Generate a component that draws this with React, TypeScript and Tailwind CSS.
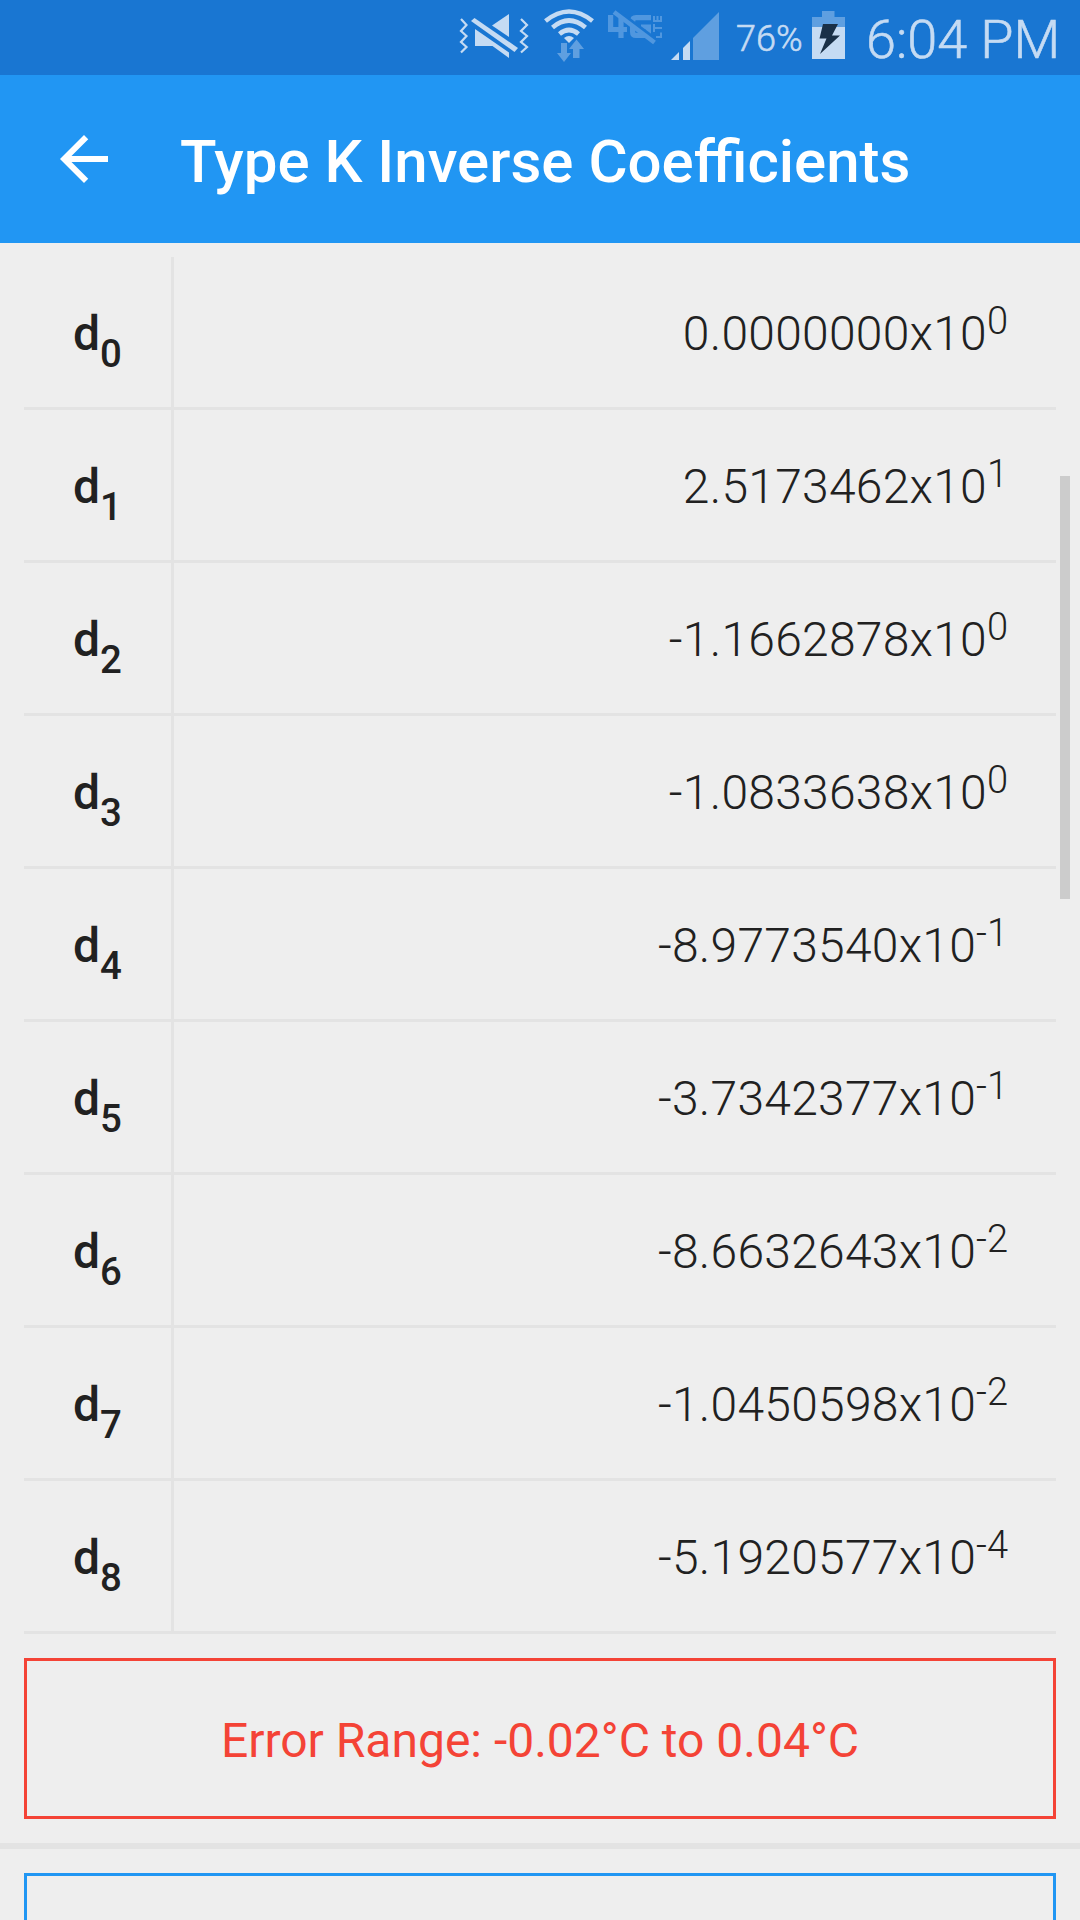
import React from 'react';

interface Coefficient {
  index: number;
  mantissa: string;
  exponent: string;
}

const coefficients: Coefficient[] = [
  { index: 0, mantissa: '0.0000000', exponent: '0' },
  { index: 1, mantissa: '2.5173462', exponent: '1' },
  { index: 2, mantissa: '-1.1662878', exponent: '0' },
  { index: 3, mantissa: '-1.0833638', exponent: '0' },
  { index: 4, mantissa: '-8.9773540', exponent: '-1' },
  { index: 5, mantissa: '-3.7342377', exponent: '-1' },
  { index: 6, mantissa: '-8.6632643', exponent: '-2' },
  { index: 7, mantissa: '-1.0450598', exponent: '-2' },
  { index: 8, mantissa: '-5.1920577', exponent: '-4' },
];

const MuteIcon: React.FC = () => (
  <svg className="h-[44px] w-[70px]" viewBox="0 0 70 44" fill="#c5dbf3">
    <path d="M16 15 L50 38.500 V44 L33.500 32 H16 Z" />
    <path d="M33 11.500 L50 0 V23 Z" />
    <path d="M12 7 L15.500 4 L59 34 L55.500 38 Z" />
    <g fill="none" stroke="#c5dbf3" strokeWidth="2.200">
      <path d="M2 5 L7.500 11 L2 17 L7.500 22 L2 28 L7.500 33 L2 38.500" />
      <path d="M62 5 L68 11 L62 17 L68 22 L62 28 L68 33 L62 38.500" />
    </g>
  </svg>
);

const WifiIcon: React.FC = () => (
  <svg className="h-[54px] w-[50px]" viewBox="0 0 50 54">
    <g fill="none" stroke="#c5dbf3" strokeWidth="4.600">
      <path d="M1.500 13 Q25 -6 48.500 13" />
      <path d="M8.500 19.500 Q25 5.500 41.500 19.500" />
      <path d="M15.500 26 Q25 18 34.500 26" />
    </g>
    <path d="M20 30 Q25 26 30 30 L25 35 Z" fill="#c5dbf3" />
    <path d="M17 35 H23 V45 H27 L20 54 L13 45 H17 Z" fill="#5f9fe0" />
    <path d="M29 50 H35.500 V41 H40 L32.500 31.500 L25 41 H29 Z" fill="#5f9fe0" />
  </svg>
);

const NoLteIcon: React.FC = () => (
  <svg className="h-[36px] w-[55px]" viewBox="0 0 55 36">
    <g fill="none" stroke="#5097df" strokeWidth="5.200">
      <path d="M2.600 6 V20.500 H19 M13 6 V29" />
      <path d="M43 8.600 H28 Q24.600 8.600 24.600 12 V23 Q24.600 26.400 28 26.400 H40.400 V18 H33" />
    </g>
    <path d="M8 1 L51 33" stroke="#1976d2" strokeWidth="4" />
    <path d="M6 3 L46.500 33.500" stroke="#5097df" strokeWidth="4.600" />
    <g fill="none" stroke="#5097df" strokeWidth="2">
      <path d="M46 7 V12 H53 V7 M49.500 7 V12" />
      <path d="M46 15 V23 M46 19 H54" />
      <path d="M48 28 H53 V23.500" />
    </g>
  </svg>
);

const SignalIcon: React.FC = () => (
  <svg className="h-[48px] w-[48px]" viewBox="0 0 48 48">
    <path d="M0 48 L8 40 V48 Z" fill="#c5dbf3" />
    <path d="M12 48 V36 L19 29 V48 Z" fill="#c5dbf3" />
    <path d="M22 48 V26 L48 0 V48 Z" fill="#5f9fe0" />
  </svg>
);

const BatteryIcon: React.FC = () => (
  <svg className="h-[48px] w-[33px]" viewBox="0 0 33 48">
    <path d="M0 6 H10 V0 H22.500 V6 H33 V17 H0 Z" fill="#5f9fe0" />
    <path d="M0 16 H33 V48 H0 Z" fill="#c5dbf3" />
    <path d="M11 13 H26 L20 24.500 H28 L8 43 L14.500 27.500 H7.500 Z" fill="#193048" />
  </svg>
);

const StatusBar: React.FC = () => (
  <div className="flex h-[75px] shrink-0 items-start bg-[#1976d2] font-light text-[#c5dbf3] [-webkit-text-stroke:0.6px_#c5dbf3]">
    <div className="ml-[459px] mt-[14px]">
      <MuteIcon />
    </div>
    <div className="ml-[15px] mt-[8px]">
      <WifiIcon />
    </div>
    <div className="ml-[14px] mt-[9px]">
      <NoLteIcon />
    </div>
    <div className="ml-[8px] mt-[12px]">
      <SignalIcon />
    </div>
    <div className="ml-[17px] mt-[18px] w-[76px] whitespace-nowrap text-[36px] leading-[42px]">76%</div>
    <div className="mt-[11px]">
      <BatteryIcon />
    </div>
    <div className="ml-[21px] mt-[8px] whitespace-nowrap text-[54px] leading-[63px]">6:04 PM</div>
  </div>
);

const AppBar: React.FC = () => (
  <div className="flex h-[168px] shrink-0 items-center bg-[#2196f3] text-white">
    <button className="ml-[60px]" aria-label="Back">
      <svg className="h-[48px] w-[48px]" viewBox="4 4 16 16" fill="currentColor">
        <path d="M20 11H7.830l5.590-5.590L12 4l-8 8 8 8 1.410-1.410L7.830 13H20v-2z" />
      </svg>
    </button>
    <h1 className="ml-[72px] mt-[6px] whitespace-nowrap text-[60px] font-medium leading-[72px]">
      Type K Inverse Coefficients
    </h1>
  </div>
);

const CoefficientRow: React.FC<{ coefficient: Coefficient }> = ({ coefficient }) => (
  <div className="flex h-[153px] border-b-3 border-[#e3e3e3]">
    <div className="w-[150px] border-r-3 border-[#e3e3e3] pl-[49px] pt-[47px] text-[48px] font-medium leading-[60px]">
      d<span className="align-[-17px] text-[38.4px] leading-[0px]">{coefficient.index}</span>
    </div>
    <div className="flex-1 pr-[48px] pt-[47px] text-right text-[48px] font-light leading-[60px]">
      <span className="tracking-[0.25px]">{coefficient.mantissa}x10</span>
      <span className="align-[16px] text-[38px] leading-[0px]">{coefficient.exponent}</span>
    </div>
  </div>
);

const App: React.FC = () => {
  return (
    <div className="relative flex h-[1920px] w-[1080px] flex-col overflow-hidden bg-[#eeeeee] font-['Roboto',sans-serif] text-[#212121]">
      <StatusBar />
      <AppBar />

      {/* Coefficient list */}
      <div className="mx-6 mt-[14px]">
        {coefficients.map((coefficient) => (
          <CoefficientRow key={coefficient.index} coefficient={coefficient} />
        ))}
      </div>

      <div className="mx-6 mt-[24px] flex h-[161px] shrink-0 items-center justify-center border-3 border-[#f44336] pt-[4px] text-[48px] text-[#f44336]">
        Error Range: -0.02°C to 0.04°C
      </div>

      <div className="mt-[24px] h-[6px] shrink-0 bg-[#e3e3e3]" />

      {/* Next range, cut off by the screen edge */}
      <div className="mx-6 mt-[24px] h-[161px] shrink-0 border-3 border-[#2196f3]" />

      {/* Scroll indicator */}
      <div className="absolute right-[10px] top-[476px] h-[423px] w-[10px] bg-[#cccccc]" />
    </div>
  );
};

export default App;
